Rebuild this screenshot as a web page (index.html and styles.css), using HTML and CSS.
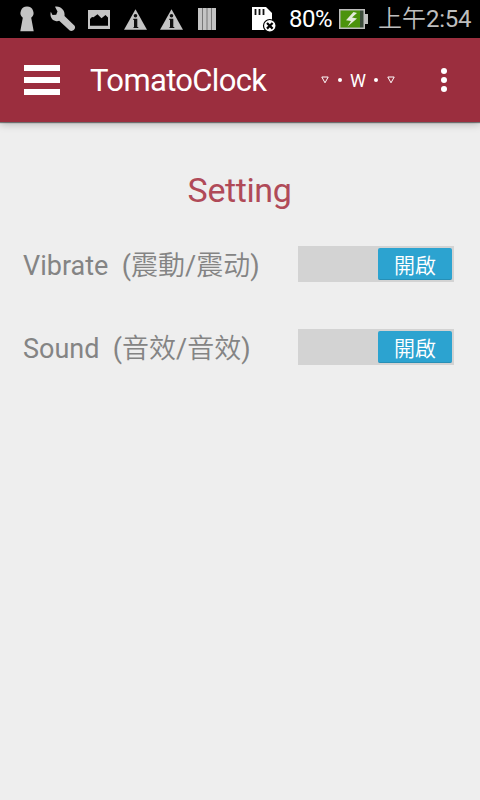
FILE: index.html
```html
<!DOCTYPE html>
<html lang="zh-Hant">
<head>
  <meta charset="UTF-8">
  <title>TomatoClock</title>
  <link rel="stylesheet" href="styles.css">
</head>
<body>
  <div class="status-bar">
    <svg class="notifications" width="216" height="38" viewBox="0 0 216 38" fill="#c4c4c4">
      <path d="M27 6.500a6.400 6.400 0 0 0-4.200 11.300L20.300 31.300h13.400L31.200 17.800A6.400 6.400 0 0 0 27 6.500z"/>
      <path d="M55 6.700l2.500 4.800-1.300 3.200-3.700.3-1.700-3.300c-1.200 4.500 1 8.500 4.800 9.300 1.300.3 2.500.2 3.600-.2l10.500 9.700c2.700 1.600 6.800-1.600 4.900-4.800L64.500 16c1-5.300-3.800-10.300-9.500-9.300z"/>
      <path fill-rule="evenodd" d="M88 10h22v19H88zM90 25.800h18V17.500l-2.500-2.500-4 3.300-4-4-4 3-1.500-.3-2 2z"/>
      <path d="M135.500 9.300L147 29.800h-23z"/>
      <path d="M171.500 9.300L183 29.800h-23z"/>
      <g fill="#111">
        <circle cx="135.500" cy="15.800" r="1.800"/>
        <path d="M133.300 18.800h4v8.200h1v1h-4.800v-1h.5v-7h-.7z"/>
        <circle cx="171.500" cy="15.800" r="1.800"/>
        <path d="M169.300 18.800h4v8.200h1v1h-4.800v-1h.5v-7h-.7z"/>
      </g>
      <path d="M198 8h18v22h-18z"/>
      <path d="M202.500 8v22M207 8v22M211.500 8v22" stroke="#777" stroke-width="1"/>
    </svg>
    <svg class="sd-card" width="26" height="28" viewBox="0 0 26 28">
      <path fill="#fff" d="M1 2h14l6 6v17H1z"/>
      <path d="M4.500 4v6M8.500 4v6M12.500 4v6" stroke="#111" stroke-width="1.800"/>
      <circle cx="18.800" cy="20.800" r="6.300" fill="#fff" stroke="#000" stroke-width="1.200"/>
      <path d="M16 18l5.600 5.600M21.600 18L16 23.600" stroke="#000" stroke-width="2.200"/>
    </svg>
    <span class="percent">80%</span>
    <svg class="battery" width="30" height="20" viewBox="0 0 30 20">
      <path fill="#bdbdbd" d="M0 0h26v5h3v10h-3v5H0z"/>
      <path fill="#4c930c" d="M1.500 1.500h19.500v17H1.500z"/>
      <path fill="#3c4c3c" d="M21 1.500h3.500v17H21z"/>
      <path fill="#e4eadc" d="M14.500 3L7 11.200l5 .8-3.500 5.500 9.500-8-5-1 5-4.500z"/>
    </svg>
    <span class="time">上午<b>2:54</b></span>
  </div>

  <header class="app-bar">
    <button class="menu"><span></span><span></span><span></span></button>
    <h1>TomatoClock</h1>
    <div class="face">
      <svg width="8" height="8" viewBox="0 0 8 8"><path d="M.8 1h6.400L4 6.800z"/></svg>
      <i></i><b>W</b><i></i>
      <svg width="8" height="8" viewBox="0 0 8 8"><path d="M.8 1h6.400L4 6.800z"/></svg>
    </div>
    <button class="more"><span></span><span></span><span></span></button>
  </header>

  <main>
    <h2>Setting</h2>
    <div class="row">
      <span class="label">Vibrate&nbsp; (震動/震动)</span>
      <div class="switch"><span>開啟</span></div>
    </div>
    <div class="row">
      <span class="label">Sound&nbsp; (音效/音效)</span>
      <div class="switch"><span>開啟</span></div>
    </div>
  </main>
</body>
</html>
```
FILE: styles.css
```css
* { box-sizing: border-box; margin: 0; padding: 0; }
body {
  font-family: Roboto, "Noto Sans CJK TC DemiLight", "Noto Sans CJK TC", sans-serif;
  background: #eee;
  height: 800px;
  overflow: hidden;
}
button { background: none; border: none; }
svg { display: block; flex: none; }

.status-bar {
  height: 38px;
  background: #000;
  display: flex; align-items: center;
  white-space: nowrap;
}
.sd-card { margin-left: 35px; }
.percent {
  width: 43px; margin-left: 12px;
  color: #fff; font-size: 24px; letter-spacing: -.5px;
}
.battery { margin-left: 7px; }
.time {
  margin-left: 9px;
  color: #bebebe; font-size: 24px; line-height: 38px;
  font-weight: 300;
}
.time b { font-weight: 400; letter-spacing: -.3px; }

.app-bar {
  height: 84px;
  background: #9b2e3e;
  color: #fff;
  display: flex; align-items: center;
  box-shadow: 0 1px 1px rgba(0,0,0,.45), 0 2px 8px rgba(0,0,0,.25);
}
.menu {
  width: 36px; margin-left: 24px;
  display: grid; gap: 6px;
}
.menu span { height: 6px; background: #fff; }
.app-bar h1 {
  width: 180px; margin-left: 30px;
  font-size: 31px; font-weight: 400; letter-spacing: -.65px;
}
.face {
  width: 74px; margin-left: 51px;
  display: flex; align-items: center; justify-content: space-between;
}
.face path { fill: none; stroke: #fff; stroke-width: 1; }
.face i { width: 4px; height: 4px; border-radius: 50%; background: #fff; }
.face b { font-size: 18px; font-weight: 400; }
.more {
  margin-left: 46px;
  display: grid; gap: 3px;
}
.more span { width: 6px; height: 6px; border-radius: 50%; background: #fff; }

main { padding: 44px 26px 0 23px; }
h2 {
  height: 48px; line-height: 48px;
  padding-left: 2px;
  color: #b04a58;
  font-size: 34px; font-weight: 400; letter-spacing: -.4px;
  text-align: center;
}
.row {
  height: 36px; margin-top: 32px;
  display: flex; align-items: center; justify-content: space-between;
}
.row + .row { margin-top: 47px; }
.label {
  padding-top: 4px;
  color: #848484;
  font-size: 27px; line-height: 36px;
  white-space: nowrap;
}
.switch {
  width: 156px; height: 36px; padding: 2px;
  background: #d3d3d3;
  display: flex; justify-content: flex-end;
}
.switch span {
  width: 74px; height: 32px; padding-top: 3px;
  background: #2ca3d0; color: #fff;
  border-radius: 2px;
  border-bottom: 1px solid #278fb6;
  font-size: 21px; line-height: 31px; text-align: center;
}
```
